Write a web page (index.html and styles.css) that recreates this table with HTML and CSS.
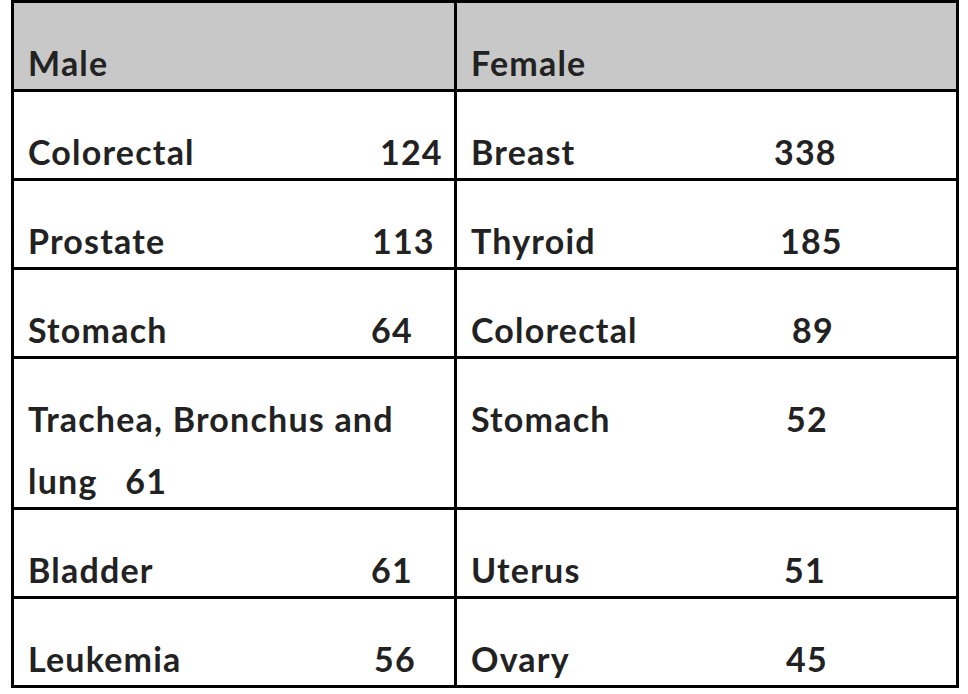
FILE: index.html
```html
<!DOCTYPE html>
<html lang="en">
<head>
<meta charset="utf-8">
<title>Cancer incidence by sex</title>
<link rel="stylesheet" href="styles.css">
</head>
<body>
<table class="stats">
  <colgroup>
    <col class="col-male">
    <col class="col-female">
  </colgroup>
  <thead>
    <tr>
      <th><div class="txt">Male</div></th>
      <th><div class="txt">Female</div></th>
    </tr>
  </thead>
  <tbody>
    <tr>
      <td><div class="txt"><span class="lbl" style="width:352px">Colorectal</span>124</div></td>
      <td><div class="txt"><span class="lbl" style="width:303px">Breast</span>338</div></td>
    </tr>
    <tr>
      <td><div class="txt"><span class="lbl" style="width:344px">Prostate</span>113</div></td>
      <td><div class="txt"><span class="lbl" style="width:309px">Thyroid</span>185</div></td>
    </tr>
    <tr>
      <td><div class="txt"><span class="lbl" style="width:343px">Stomach</span>64</div></td>
      <td><div class="txt"><span class="lbl" style="width:321px">Colorectal</span>89</div></td>
    </tr>
    <tr>
      <td><div class="txt wrap">Trachea, Bronchus and lung&ensp; 61</div></td>
      <td><div class="txt"><span class="lbl" style="width:315px">Stomach</span>52</div></td>
    </tr>
    <tr>
      <td><div class="txt"><span class="lbl" style="width:343px">Bladder</span>61</div></td>
      <td><div class="txt"><span class="lbl" style="width:313px">Uterus</span>51</div></td>
    </tr>
    <tr class="last">
      <td><div class="txt"><span class="lbl" style="width:346px">Leukemia</span>56</div></td>
      <td><div class="txt"><span class="lbl" style="width:315px">Ovary</span>45</div></td>
    </tr>
  </tbody>
</table>
</body>
</html>
```

FILE: styles.css
```css
html, body {
  margin: 0;
  padding: 0;
  background: #ffffff;
}

body {
  font-family: Lato, "Open Sans", "Liberation Sans", sans-serif;
  font-weight: 700;
  font-size: 34px;
  letter-spacing: 1.2px;
  color: #222222;
}

.stats {
  box-sizing: border-box;
  width: 948px;
  margin: 0 0 0 11px;
  border: 3px solid #000;
  border-collapse: separate;
  border-spacing: 0;
  table-layout: fixed;
}

.col-male {
  width: 443px;
}

.col-female {
  width: 499px;
}

.stats th,
.stats td {
  padding: 29px 4px 0 14px;
  vertical-align: top;
  text-align: left;
  font-weight: 700;
  line-height: 62px;
  border-bottom: 3px solid #000;
}

.stats th:first-child,
.stats td:first-child {
  border-right: 3px solid #000;
}

.stats thead th {
  background: #c8c8c8;
}

.stats .last td {
  border-bottom: none;
}

.txt {
  margin-bottom: -5px;
  white-space: nowrap;
}

.txt.wrap {
  white-space: normal;
}

.lbl {
  display: inline-block;
}
```
